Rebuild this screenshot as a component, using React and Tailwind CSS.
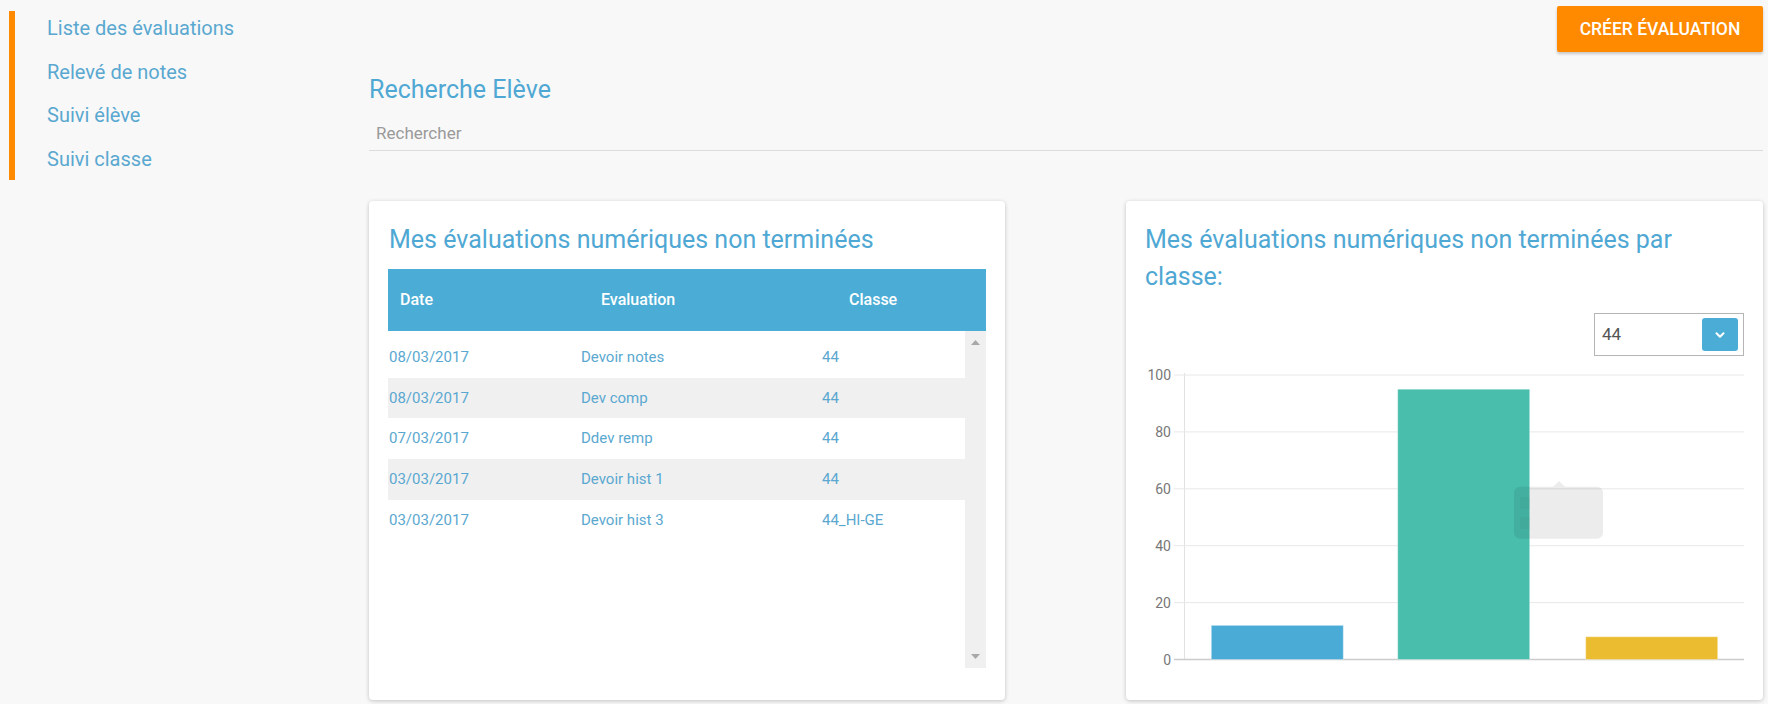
import { ChevronDown } from "lucide-react";

const menu = ["Liste des évaluations", "Relevé de notes", "Suivi élève", "Suivi classe"];

const rows = [
  { date: "08/03/2017", name: "Devoir notes", classe: "44" },
  { date: "08/03/2017", name: "Dev comp", classe: "44" },
  { date: "07/03/2017", name: "Ddev remp", classe: "44" },
  { date: "03/03/2017", name: "Devoir hist 1", classe: "44" },
  { date: "03/03/2017", name: "Devoir hist 3", classe: "44_HI-GE" },
];

const bars = [
  { x: 66.3, value: 12, color: "#4aabd6" },
  { x: 252.7, value: 95, color: "#49bead" },
  { x: 440.7, value: 8, color: "#ecbc30" },
];

const ticks = [100, 80, 60, 40, 20, 0];
const yOf = (v) => 15 + (100 - v) * 2.845;

function Sidebar() {
  return (
    <aside className="w-[369px] shrink-0 pl-[9px] pt-[11px]">
      <div className="flex">
        <div className="w-[6px] h-[169px] bg-[#ff8a00]" />
        {/* menu links */}
        <ul className="pl-[32px] -mt-[4px]">
          {menu.map((item) => (
            <li key={item} className="h-[43.7px] leading-[43.7px] text-[20px] text-[#5aa8d0]">
              {item}
            </li>
          ))}
        </ul>
      </div>
    </aside>
  );
}

function EvaluationsTable() {
  return (
    <div className="flex-1 bg-white rounded-[4px] shadow-[0_1px_4px_rgba(0,0,0,0.22)] px-[19px] pt-[20px] pb-[32px]">
      <h2 className="text-[25px] leading-[37px] text-[#4fa8d3] pl-[1px]">
        Mes évaluations numériques non terminées
      </h2>
      <div className="mt-[11px]">
        <div className="h-[62px] bg-[#4badd5] flex items-center text-white text-[16px] font-medium">
          <div className="w-[201px] pl-[12px]">Date</div>
          <div className="w-[248px] pl-[12px]">Evaluation</div>
          <div className="pl-[12px]">Classe</div>
        </div>
        <div className="flex h-[337px]">
          <div className="flex-1 pt-[6px]">
            {rows.map((r, i) => (
              <div
                key={i}
                className={`h-[40.67px] flex items-center text-[15px] text-[#5aa8d0] ${
                  i % 2 === 1 ? "bg-[#f0f0f0]" : "bg-white"
                }`}
              >
                <div className="w-[193px] pl-[1px]">{r.date}</div>
                <div className="w-[241px]">{r.name}</div>
                <div>{r.classe}</div>
              </div>
            ))}
          </div>
          {/* scrollbar */}
          <div className="w-[21px] bg-[#f0f0f0] flex flex-col items-center justify-between pt-[9px] pb-[9px]">
            <svg width="9" height="5" viewBox="0 0 9 5">
              <path d="M0 5 L4.5 0 L9 5 Z" fill="#a8a8a8" />
            </svg>
            <svg width="9" height="5" viewBox="0 0 9 5">
              <path d="M0 0 L4.5 5 L9 0 Z" fill="#a8a8a8" />
            </svg>
          </div>
        </div>
      </div>
    </div>
  );
}

function ClassChart() {
  return (
    <div className="flex-1 bg-white rounded-[4px] shadow-[0_1px_4px_rgba(0,0,0,0.22)] px-[19px] pt-[20px] pb-[20px]">
      <h2 className="text-[25px] leading-[37px] text-[#4fa8d3] pr-[40px]">
        Mes évaluations numériques non terminées par classe:
      </h2>
      <div className="flex justify-end mt-[18px]">
        <div className="w-[150px] h-[43px] border border-[#b5b5b5] flex items-center justify-between pl-[7px] pr-[5px]">
          <span className="text-[17px] text-[#555]">44</span>
          <div className="w-[36px] h-[33px] rounded-[3px] bg-[#4badd5] flex items-center justify-center">
            <ChevronDown size={14} strokeWidth={3.5} color="#fff" />
          </div>
        </div>
      </div>
      <svg width="599" height="320" viewBox="0 0 599 320" className="mt-[4px] block">
        <line x1="39.5" y1="13" x2="39.5" y2="300" stroke="#e2e2e2" />
        {ticks.map((t) => (
          <g key={t}>
            <line
              x1="29"
              y1={yOf(t)}
              x2="599"
              y2={yOf(t)}
              stroke={t === 0 ? "#cccccc" : "#e8e8e8"}
              strokeWidth={t === 0 ? 1.5 : 1}
            />
            <text
              x="26"
              y={yOf(t) + 5}
              textAnchor="end"
              fontSize="14"
              fill="#777"
              fontFamily="Roboto, sans-serif"
            >
              {t}
            </text>
          </g>
        ))}
        {bars.map((b) => (
          <rect
            key={b.x}
            x={b.x}
            y={yOf(b.value)}
            width="132"
            height={299.5 - yOf(b.value)}
            fill={b.color}
            stroke="rgba(255,255,255,0.35)"
          />
        ))}
        {/* faded tooltip */}
        <g opacity="0.6">
          <path d="M408 126.7 L414 121 L420 126.7 Z" fill="rgba(0,0,0,0.12)" />
          <rect x="369" y="126.7" width="89" height="52" rx="6" fill="rgba(0,0,0,0.12)" />
          <rect x="375" y="137" width="10" height="12" fill="rgba(0,0,0,0.05)" />
          <rect x="375" y="157" width="10" height="12" fill="rgba(0,0,0,0.05)" />
        </g>
      </svg>
    </div>
  );
}

export default function App() {
  return (
    <div className="w-full h-[704px] overflow-hidden bg-[#f8f8f8] flex font-[Roboto,sans-serif]">
      <Sidebar />
      <main className="flex-1 flex flex-col pr-[5px]">
        <div className="flex justify-end pt-[6px]">
          <button className="w-[206px] h-[46px] bg-[#ff8a00] text-white text-[17.5px] font-medium rounded-[2px] shadow-[0_2px_3px_rgba(0,0,0,0.2)]">
            CRÉER ÉVALUATION
          </button>
        </div>
        <h1 className="mt-[23px] text-[25px] leading-[30px] text-[#4fa8d3]">Recherche Elève</h1>
        <div className="mt-[13px] h-[33px] border-b border-[#dcdcdc] flex items-center pl-[7px]">
          <span className="text-[17px] text-[#9a9a9a]">Rechercher</span>
        </div>
        <div className="mt-[50px] flex gap-[121px]">
          <EvaluationsTable />
          <ClassChart />
        </div>
      </main>
    </div>
  );
}
